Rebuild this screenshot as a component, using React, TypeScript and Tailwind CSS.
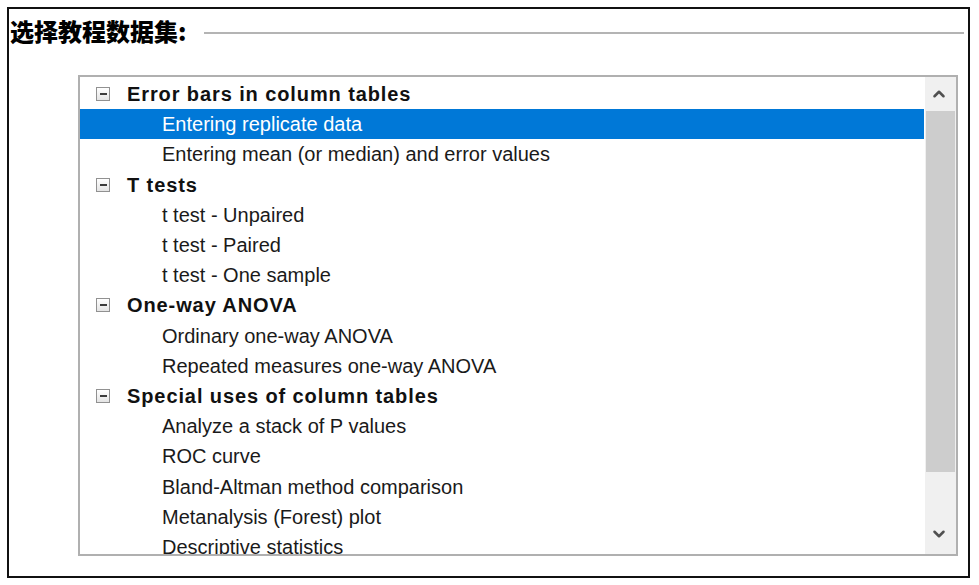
import { ChevronUp, ChevronDown } from "lucide-react";

type Group = { title: string; items: string[] };

const groups: Group[] = [
  { title: "Error bars in column tables", items: ["Entering replicate data", "Entering mean (or median) and error values"] },
  { title: "T tests", items: ["t test - Unpaired", "t test - Paired", "t test - One sample"] },
  { title: "One-way ANOVA", items: ["Ordinary one-way ANOVA", "Repeated measures one-way ANOVA"] },
  {
    title: "Special uses of column tables",
    items: [
      "Analyze a stack of P values",
      "ROC curve",
      "Bland-Altman method comparison",
      "Metanalysis (Forest) plot",
      "Descriptive statistics",
    ],
  },
];

function MinusBox() {
  return (
    <span className="flex h-[14px] w-[14px] items-center justify-center border border-[#919191] bg-gradient-to-b from-white to-[#e4e4e4]">
      <span className="h-[2px] w-[7px] bg-[#3b3b3b]" />
    </span>
  );
}

export default function App() {
  const selected = "Entering replicate data";
  return (
    <div className="h-[585px] w-[979px] bg-white p-[7px] font-['Liberation_Sans','Noto_Sans_CJK_SC',sans-serif]">
      <div className="flex h-[571px] w-[963px] flex-col border-2 border-[#111] bg-white">
        <div className="flex items-center gap-[18px] pl-[1px] pr-[4px] pt-[7px]">
          <span className="font-['Noto_Sans_CJK_SC',sans-serif] text-[24px] font-black leading-[30px] text-black">选择教程数据集:</span>
          <div className="mt-[3px] h-0 flex-1 border-t-2 border-[#b4b4b4]" />
        </div>
        <div className="ml-[69px] mt-[29px] flex h-[481px] w-[880px] border-2 border-[#b0b0b0]">
          <div className="flex-1 overflow-hidden pt-[2px]">
            {groups.map((g) => (
              <div key={g.title}>
                <div className="flex h-[30.2px] items-center gap-[17px] pl-[16px]">
                  <MinusBox />
                  <span className="text-[20px] font-bold tracking-[0.9px] text-[#111]">{g.title}</span>
                </div>
                {g.items.map((it) => (
                  <div
                    key={it}
                    className={
                      it === selected
                        ? "mr-[1px] flex h-[30.2px] items-center bg-[#0078d7] pl-[82px] text-[20px] text-white"
                        : "flex h-[30.2px] items-center pl-[82px] text-[20px] text-[#1a1a1a]"
                    }
                  >
                    {it}
                  </div>
                ))}
              </div>
            ))}
          </div>
          <div className="flex w-[31px] flex-col bg-[#f0f0f0]">
            <div className="flex h-[34px] items-center justify-center pr-[3px]">
              <ChevronUp size={18} strokeWidth={3.4} className="text-[#505050]" />
            </div>
            <div className="mx-[1px] h-[361px] bg-[#cdcdcd]" />
            <div className="flex-1" />
            <div className="flex h-[40px] items-center justify-center pr-[3px]">
              <ChevronDown size={18} strokeWidth={3.4} className="text-[#505050]" />
            </div>
          </div>
        </div>
      </div>
    </div>
  );
}
